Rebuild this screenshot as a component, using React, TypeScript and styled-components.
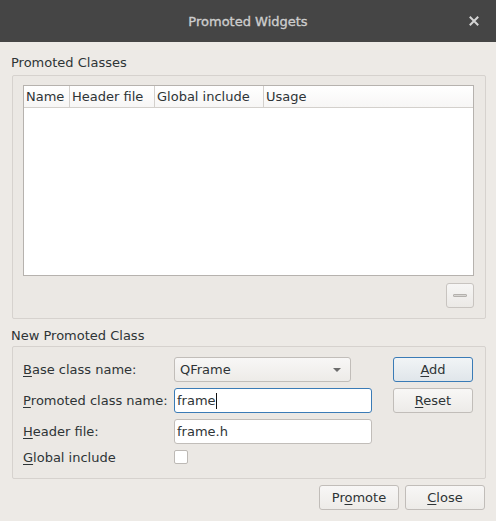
import React, { useState } from 'react';
import styled, { createGlobalStyle } from 'styled-components';

const GlobalStyle = createGlobalStyle`
  html, body {
    margin: 0;
    padding: 0;
    background: #edeae6;
  }
  body {
    font-family: "DejaVu Sans", "Liberation Sans", sans-serif;
    font-size: 13px;
    color: #2e3436;
  }
`;

const Window = styled.div`
  width: 496px;
  height: 521px;
  display: flex;
  flex-direction: column;
  background: #edeae6;
  overflow: hidden;
`;

const TitleBar = styled.div`
  height: 42px;
  flex: none;
  background: #454545;
  display: flex;
  align-items: center;
  justify-content: center;
  position: relative;
  color: #cdcdcd;
  font-size: 13px;
  -webkit-text-stroke: 0.35px #cdcdcd;
`;

const CloseX = styled.button`
  position: absolute;
  right: 14px;
  top: 13px;
  width: 16px;
  height: 16px;
  padding: 0;
  border: none;
  background: transparent;
  display: flex;
  align-items: center;
  justify-content: center;
  cursor: pointer;
`;

const Body = styled.div`
  flex: 1;
  display: flex;
  flex-direction: column;
  padding: 13px 11px 0 12px;
`;

const SectionLabel = styled.div`
  height: 20px;
  line-height: 15px;
  margin-left: -1px;
`;

const GroupBox = styled.div<{ $h: number }>`
  box-sizing: border-box;
  width: 474px;
  height: ${(p) => p.$h}px;
  border: 1px solid #d6d2ce;
  border-radius: 2px;
  background: #ebe8e4;
  padding: 9px 11px 10px 10px;
  display: flex;
  flex-direction: column;
`;

const Table = styled.div`
  box-sizing: border-box;
  height: 192px;
  border: 1px solid #b6b2ae;
  background: #fff;
  display: flex;
  flex-direction: column;
`;

const HeaderRow = styled.div`
  display: flex;
  height: 21px;
  border-bottom: 1px solid #d3d0cc;
  background: linear-gradient(#ffffff, #f7f6f5);
`;

const HeaderCell = styled.div<{ $w?: number }>`
  box-sizing: border-box;
  ${(p) => (p.$w ? `width: ${p.$w}px;` : 'flex: 1;')}
  padding-left: 2px;
  line-height: 21px;
  border-right: 1px solid #d3d0cc;
  &:last-child {
    border-right: none;
  }
`;

const ToolRow = styled.div`
  display: flex;
  justify-content: flex-end;
  margin-top: 7px;
`;

const IconButton = styled.button`
  box-sizing: border-box;
  width: 28px;
  height: 25px;
  padding: 0;
  border: 1px solid #c8c4c0;
  border-radius: 3px;
  background: linear-gradient(#f7f6f5, #ebe9e6);
  display: flex;
  align-items: center;
  justify-content: center;
`;

const MinusBar = styled.span`
  width: 14px;
  height: 3px;
  border: 1px solid #b4b1ad;
  background: #d8d6d3;
  border-radius: 1px;
  box-sizing: border-box;
`;

const SecondLabel = styled(SectionLabel)`
  margin-top: 9px;
  height: 18px;
`;

const FormGrid = styled.div`
  display: grid;
  grid-template-columns: 151px 219px 80px;
  grid-template-rows: 25px 25px 25px 14px;
  row-gap: 6px;
  padding-top: 1px;
`;

const FieldLabel = styled.label`
  display: flex;
  align-items: center;
  white-space: nowrap;
  u {
    text-decoration: underline;
    text-underline-offset: 2px;
  }
`;

const Field = styled.div<{ $focused?: boolean }>`
  box-sizing: border-box;
  width: 198px;
  height: 25px;
  border: 1px solid ${(p) => (p.$focused ? '#3a7bb6' : '#c1bdb9')};
  border-radius: 3px;
  background: #fff;
  display: flex;
  align-items: center;
  padding-left: 2px;
`;

const Combo = styled.div`
  box-sizing: border-box;
  width: 177px;
  height: 25px;
  border: 1px solid #c1bdb9;
  border-radius: 3px;
  background: linear-gradient(#f8f7f6, #edebe8);
  display: flex;
  align-items: center;
  justify-content: space-between;
  padding: 0 9px 0 5px;
`;

const Caret = styled.span`
  width: 0;
  height: 0;
  border-left: 4px solid transparent;
  border-right: 4px solid transparent;
  border-top: 4px solid #6c6c6c;
`;

const Cursor = styled.span`
  display: inline-block;
  width: 1px;
  height: 16px;
  background: #111;
`;

const Button = styled.button<{ $default?: boolean }>`
  box-sizing: border-box;
  width: 80px;
  height: 25px;
  border: 1px solid ${(p) => (p.$default ? '#3a7bb6' : '#c1bdb9')};
  border-radius: 3px;
  background: ${(p) =>
    p.$default ? 'linear-gradient(#f1f4f6, #e0e6ea)' : 'linear-gradient(#f8f7f6, #edebe8)'};
  font-family: inherit;
  font-size: 13px;
  color: #2e3436;
  padding: 0;
  u {
    text-decoration: underline;
    text-underline-offset: 2px;
  }
`;

const CheckBox = styled.span`
  box-sizing: border-box;
  width: 14px;
  height: 14px;
  border: 1px solid #bdb9b5;
  border-radius: 2px;
  background: #fff;
`;

const CheckCell = styled.div`
  display: flex;
  align-items: flex-start;
`;

const Footer = styled.div`
  display: flex;
  justify-content: flex-end;
  gap: 6px;
  margin-top: 6px;
`;

const App: React.FC = () => {
  const [value] = useState('frame');

  return (
    <>
      <GlobalStyle />
      <Window>
        <TitleBar>
          Promoted Widgets
          <CloseX aria-label="Close">
            <svg width="10" height="10" viewBox="0 0 10 10">
              <path d="M1.5 1.5 L8.5 8.5 M8.5 1.5 L1.5 8.5" stroke="#d4d4d4" strokeWidth="2" strokeLinecap="square" />
            </svg>
          </CloseX>
        </TitleBar>
        <Body>
          <SectionLabel>Promoted Classes</SectionLabel>
          <GroupBox $h={244}>
            <Table>
              <HeaderRow>
                <HeaderCell $w={46}>Name</HeaderCell>
                <HeaderCell $w={85}>Header file</HeaderCell>
                <HeaderCell $w={109}>Global include</HeaderCell>
                <HeaderCell>Usage</HeaderCell>
              </HeaderRow>
            </Table>
            <ToolRow>
              <IconButton aria-label="Remove">
                <MinusBar />
              </IconButton>
            </ToolRow>
          </GroupBox>
          <SecondLabel>New Promoted Class</SecondLabel>
          <GroupBox $h={133}>
            <FormGrid>
              <FieldLabel>
                <u>B</u>ase class name:
              </FieldLabel>
              <div>
                <Combo>
                  QFrame
                  <Caret />
                </Combo>
              </div>
              <Button $default>
                <u>A</u>dd
              </Button>

              <FieldLabel>
                <u>P</u>romoted class name:
              </FieldLabel>
              <Field $focused>
                {value}
                <Cursor />
              </Field>
              <Button>
                <u>R</u>eset
              </Button>

              <FieldLabel>
                <u>H</u>eader file:
              </FieldLabel>
              <Field>frame.h</Field>
              <div />

              <FieldLabel>
                <u>G</u>lobal include
              </FieldLabel>
              <CheckCell>
                <CheckBox />
              </CheckCell>
              <div />
            </FormGrid>
          </GroupBox>
          <Footer>
            <Button>
              Pr<u>o</u>mote
            </Button>
            <Button>
              <u>C</u>lose
            </Button>
          </Footer>
        </Body>
      </Window>
    </>
  );
};

export default App;
